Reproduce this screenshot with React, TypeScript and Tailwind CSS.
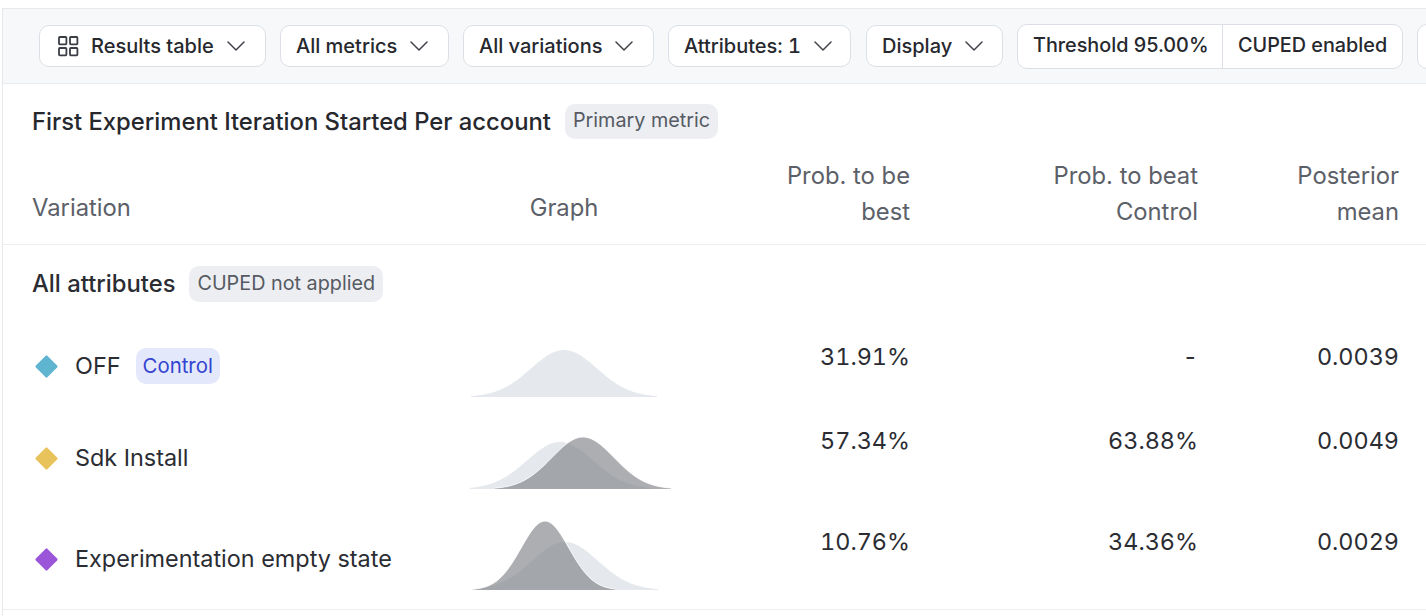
import React from "react";

function gaussPath(c: number, sigma: number, peak: number, base: number, half: number) {
  const pts: string[] = [];
  for (let x = c - half; x <= c + half; x += 2) {
    const y = base - peak * Math.exp(-((x - c) ** 2) / (2 * sigma * sigma));
    pts.push(`L${x.toFixed(1)} ${y.toFixed(2)}`);
  }
  return { area: `M${c - half} ${base} ${pts.join(" ")} L${c + half} ${base} Z`, line: `M${pts.join(" ").slice(1)}` };
}

type Curve = { c: number; s: number; p: number; h: number };

// Curve x coordinates are page x; the svg spans 444..684
function Graph({ light, dark }: { light: Curve; dark?: Curve }) {
  const l = gaussPath(light.c, light.s, light.p, 67, light.h);
  const d = dark ? gaussPath(dark.c, dark.s, dark.p, 67, dark.h) : null;
  return (
    <svg width="240" height="70" viewBox="444 0 240 70" className="block overflow-visible">
      <path d={l.area} fill="#e5e8ec" />
      {d && <path d={d.area} fill="#808387" fillOpacity="0.65" />}
      {d && <path d={d.line} fill="none" stroke="#ffffff" strokeOpacity="0.85" strokeWidth="1" />}
    </svg>
  );
}

function Chevron() {
  return (
    <svg width="18" height="18" viewBox="0 0 18 18" fill="none" stroke="#3f4248" strokeWidth="1.5" strokeLinecap="round" strokeLinejoin="round" className="shrink-0">
      <path d="M1 5 9 13 17 5" />
    </svg>
  );
}

function GridIcon() {
  return (
    <svg width="22" height="22" viewBox="0 0 22 22" fill="none" stroke="#3a3d44" strokeWidth="1.8" className="shrink-0 ml-[2px] -mr-[1px]">
      <rect x="2" y="2" width="7.4" height="7.4" rx="0.8" />
      <rect x="13" y="2" width="7.4" height="7.4" rx="0.8" />
      <rect x="2" y="13" width="7.4" height="7.4" rx="0.8" />
      <rect x="13" y="13" width="7.4" height="7.4" rx="0.8" />
    </svg>
  );
}

function Btn({ label, width, icon, extra }: { label: string; width: string; icon?: boolean; extra?: string }) {
  return (
    <div className={`h-[42px] ${width} shrink-0 rounded-[10px] border border-[#dcdfe6] bg-white flex items-center pl-[15px] gap-[13px] text-[#26282e] ${extra ?? ""}`}>
      {icon && <GridIcon />}
      <span>{label}</span>
      <Chevron />
    </div>
  );
}

const rowGrid = "grid grid-cols-[399px_266px_213px_288px_201px] pl-[29px]";

function Row({
  name,
  color,
  control,
  light,
  dark,
  a,
  b,
  c,
  height,
  numPad,
}: {
  name: string;
  color: string;
  control?: boolean;
  light: Curve;
  dark?: Curve;
  a: string;
  b: string;
  c: string;
  height: string;
  numPad: string;
}) {
  return (
    <div className={`${rowGrid} ${height}`}>
      <div className="flex items-center h-[72px] gap-[14px]">
        <svg width="29" height="29" viewBox="0 0 29 29" className="shrink-0">
          <rect x="6.25" y="6.25" width="16.5" height="16.5" rx="1.5" fill={color} transform="rotate(45 14.5 14.5)" />
        </svg>
        <span className="text-[23.4px] text-[#2b2d33]">{name}</span>
        {control && (
          <span className="ml-[1px] h-[36px] px-[7px] rounded-[10px] bg-[#e4e8fb] text-[#3344d0] flex items-center text-[20.4px]">Control</span>
        )}
      </div>
      <div className="flex justify-center">
        <Graph light={light} dark={dark} />
      </div>
      <div className={`text-right tabular-nums text-[23.4px] ${numPad}`}>{a}</div>
      <div className={`text-right tabular-nums text-[23.4px] ${numPad}`}>{b}</div>
      <div className={`text-right tabular-nums text-[23.4px] ${numPad}`}>{c}</div>
    </div>
  );
}

export default function App() {
  return (
    <div className="h-[616px] w-[1426px] overflow-hidden bg-white pt-[8px] pl-[2px] font-['Inter',sans-serif] text-[23.8px] text-[#2b2d33]">
      <div className="border-l border-t border-[#e6e8ec] h-[608px] flex flex-col">
        <div className="h-[75px] shrink-0 bg-[#f7f8fa] border-b border-[#e9ebef] flex items-center gap-[14px] pl-[36px] text-[20px] font-medium overflow-hidden">
          <Btn label="Results table" width="w-[227px]" icon />
          <Btn label="All metrics" width="w-[169px]" />
          <Btn label="All variations" width="w-[191px]" />
          <Btn label="Attributes: 1" width="w-[183px]" extra="tabular-nums mr-[1px]" />
          <Btn label="Display" width="w-[137px]" />
          <div className="h-[45px] w-[386px] shrink-0 rounded-[10px] border border-[#dcdfe6] bg-white flex text-[#26282e] text-[19.8px]">
            <div className="w-[205px] border-r border-[#dcdfe6] flex items-center pl-[15px]">Threshold 95.00%</div>
            <div className="flex items-center pl-[15px]">CUPED enabled</div>
          </div>
          <div className="h-[45px] w-[60px] shrink-0 rounded-[10px] border border-[#dcdfe6] bg-white" />
        </div>

        <div className="h-[161px] shrink-0 border-b border-[#eceef1] flex flex-col">
          <div className="flex items-center pl-[29px] h-[75px] pt-[1px] gap-[14px]">
            <span className="font-medium text-[#26282e]">First Experiment Iteration Started Per account</span>
            <span className="h-[35px] mb-[2px] px-[8px] rounded-[10px] bg-[#eceef2] text-[#565a62] text-[19.8px] flex items-center">Primary metric</span>
          </div>
          <div className={`${rowGrid} text-[#5c6068] items-end leading-[36px] h-[72px] -mt-[1px]`}>
            <div className="pb-[4px]">Variation</div>
            <div className="text-center pb-[4px]">Graph</div>
            <div className="text-right">Prob. to be<br />best</div>
            <div className="text-right">Prob. to beat<br />Control</div>
            <div className="text-right">Posterior<br />mean</div>
          </div>
        </div>

        <div className="h-[85px] shrink-0 flex items-start pl-[29px] pt-[21px] gap-[14px]">
          <span className="font-medium text-[#2b2d33] h-[36px] flex items-center">All attributes</span>
          <span className="h-[36px] px-[8px] rounded-[10px] bg-[#eceef2] text-[#565a62] text-[19.8px] flex items-center">CUPED not applied</span>
        </div>

        <Row name="OFF" color="#5fb4d0" control light={{ c: 564, s: 33, p: 47, h: 93 }} a="31.91%" b="-" c="0.0039" height="h-[92px]" numPad="pt-[9px]" />
        <Row name="Sdk Install" color="#e8c35c" light={{ c: 560, s: 33, p: 47, h: 90 }} dark={{ c: 583, s: 31, p: 52, h: 88 }} a="57.34%" b="63.88%" c="0.0049" height="h-[101px]" numPad="pt-[1px]" />
        <Row name="Experimentation empty state" color="#9b55d8" light={{ c: 565, s: 33, p: 48, h: 93 }} dark={{ c: 545, s: 24, p: 69, h: 70 }} a="10.76%" b="34.36%" c="0.0029" height="h-[86px]" numPad="pt-[1px]" />

        <div className="border-t border-[#eceef1]" />
      </div>
    </div>
  );
}
